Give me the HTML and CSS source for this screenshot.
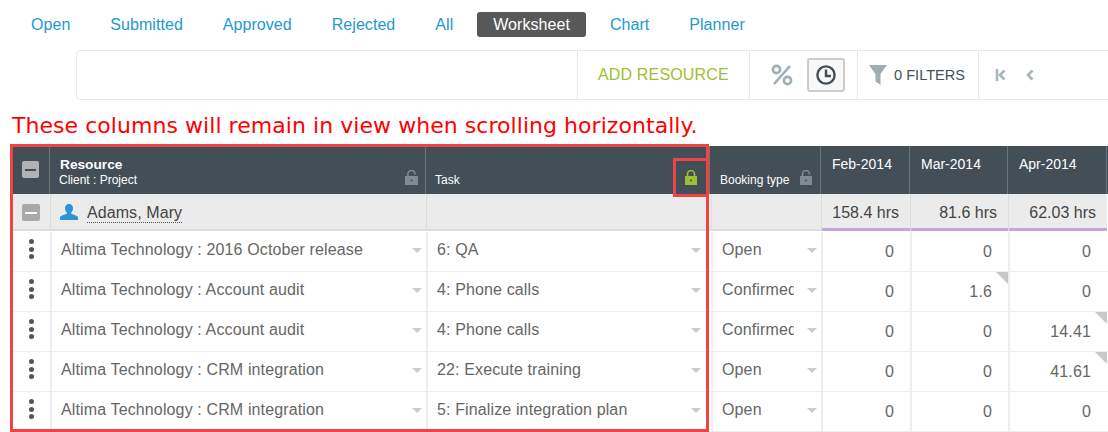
FILE: index.html
```html
<!DOCTYPE html>
<html lang="en">
<head>
  <meta charset="UTF-8">
  <title>Worksheet</title>
  <link rel="stylesheet" href="styles.css">
</head>
<body>

<nav class="tabs">
  <a>Open</a>
  <a>Submitted</a>
  <a>Approved</a>
  <a>Rejected</a>
  <a>All</a>
  <a class="active">Worksheet</a>
  <a>Chart</a>
  <a>Planner</a>
</nav>

<div class="toolbar">
  <div class="tool-space"></div>
  <div class="tool-section add">ADD RESOURCE</div>
  <div class="tool-section units">
    <svg class="percent" width="22" height="22" viewBox="0 0 22 22" fill="none" stroke="#9fadb4" stroke-width="2.6">
      <circle cx="5.5" cy="5.5" r="3.6"/>
      <circle cx="16.5" cy="16.5" r="3.6"/>
      <path d="M19 2 3 20"/>
    </svg>
    <span class="clock-btn">
      <svg width="20" height="20" viewBox="0 0 20 20" fill="none" stroke="#434e57" stroke-width="2.4">
        <circle cx="10" cy="10" r="8.6"/>
        <path d="M10 4.5V11H15"/>
      </svg>
    </span>
  </div>
  <div class="tool-section filters">
    <svg width="18" height="20" viewBox="0 0 18 20"><path d="M0 0H18L11.5 9V20L6.5 16.5V9Z" fill="#9fadb4"/></svg>
    <span>0 FILTERS</span>
  </div>
  <div class="tool-section pager">
    <svg width="11" height="12" viewBox="0 0 11 12" fill="none" stroke="#a9b6bc" stroke-width="2.6">
      <path d="M2 0V12"/>
      <path d="M9.5 1.5 5 6l4.5 4.5"/>
    </svg>
    <svg width="8" height="12" viewBox="0 0 8 12" fill="none" stroke="#a9b6bc" stroke-width="2.6">
      <path d="M6.5 1.5 2 6l4.5 4.5"/>
    </svg>
  </div>
</div>

<p class="caption">These columns will remain in view when scrolling horizontally.</p>

<div class="sheet">
  <div class="sheet-head">
    <div class="hcell hcheck"><span class="check check-head"></span></div>
    <div class="hcell resource">
      <strong>Resource</strong>
      <small>Client : Project</small>
      <svg class="lock" width="13" height="15" viewBox="0 0 13 15"><path d="M2.900 6V4a3.600 3.600 0 0 1 7.200 0v.6" fill="none" stroke="#7f8a91" stroke-width="1.600"/><path d="M0 6H13V15H0Z" fill="#7f8a91"/><circle cx="6.500" cy="10.500" r="1" fill="#434e57"/></svg>
    </div>
    <div class="hcell task">
      <small>Task</small>
      <svg class="lock" width="12" height="15" viewBox="0 0 12 15"><path d="M2.500 6V4a3.500 3.500 0 0 1 7 0v2" fill="none" stroke="#9dbf33" stroke-width="1.600"/><path d="M0 6H12V15H0Z" fill="#9dbf33"/><circle cx="6" cy="10.500" r="1" fill="#434e57"/></svg>
    </div>
    <div class="hcell booking">
      <small>Booking type</small>
      <svg class="lock" width="12" height="15" viewBox="0 0 12 15"><path d="M2.500 6V4a3.500 3.500 0 0 1 7 0v.6" fill="none" stroke="#7f8a91" stroke-width="1.600"/><path d="M0 6H12V15H0Z" fill="#7f8a91"/><circle cx="6" cy="10.500" r="1" fill="#434e57"/></svg>
    </div>
    <div class="hcell month">Feb-2014</div>
    <div class="hcell month">Mar-2014</div>
    <div class="hcell month">Apr-2014</div>
    <div class="hcell"></div>
  </div>

  <div class="group-row">
    <div class="gcell gcheck"><span class="check check-group"></span></div>
    <div class="gcell person">
      <svg width="18" height="16" viewBox="0 0 18 16"><path d="M9 0c2.600 0 4 1.800 4 4.200 0 1.900-.8 3.400-1.800 4.300v1.300c2.700.8 5.600 1.800 6.800 3.200V16H0v-3c1.200-1.400 4.100-2.400 6.800-3.200V8.500C5.800 7.600 5 6.100 5 4.200 5 1.800 6.400 0 9 0Z" fill="#2b93d6"/></svg>
      <span class="person-name">Adams, Mary</span>
    </div>
    <div class="gcell"></div>
    <div class="gcell"></div>
    <div class="gcell total">158.4 hrs</div>
    <div class="gcell total">81.6 hrs</div>
    <div class="gcell total">62.03 hrs</div>
  </div>

  <div class="row">
    <div class="cell dots"><i></i><i></i><i></i></div>
    <div class="cell pick">Altima Technology : 2016 October release</div>
    <div class="cell pick pick-task">6: QA</div>
    <div class="cell pick">Open</div>
    <div class="cell num">0</div>
    <div class="cell num">0</div>
    <div class="cell num">0</div>
  </div>
  <div class="row">
    <div class="cell dots"><i></i><i></i><i></i></div>
    <div class="cell pick">Altima Technology : Account audit</div>
    <div class="cell pick pick-task">4: Phone calls</div>
    <div class="cell pick"><span class="clip">Confirmed</span></div>
    <div class="cell num">0</div>
    <div class="cell num noted">1.6</div>
    <div class="cell num">0</div>
  </div>
  <div class="row">
    <div class="cell dots"><i></i><i></i><i></i></div>
    <div class="cell pick">Altima Technology : Account audit</div>
    <div class="cell pick pick-task">4: Phone calls</div>
    <div class="cell pick"><span class="clip">Confirmed</span></div>
    <div class="cell num">0</div>
    <div class="cell num">0</div>
    <div class="cell num noted">14.41</div>
  </div>
  <div class="row">
    <div class="cell dots"><i></i><i></i><i></i></div>
    <div class="cell pick">Altima Technology : CRM integration</div>
    <div class="cell pick pick-task">22: Execute training</div>
    <div class="cell pick">Open</div>
    <div class="cell num">0</div>
    <div class="cell num">0</div>
    <div class="cell num noted">41.61</div>
  </div>
  <div class="row">
    <div class="cell dots"><i></i><i></i><i></i></div>
    <div class="cell pick">Altima Technology : CRM integration</div>
    <div class="cell pick pick-task">5: Finalize integration plan</div>
    <div class="cell pick">Open</div>
    <div class="cell num">0</div>
    <div class="cell num">0</div>
    <div class="cell num">0</div>
  </div>

  <!-- Annotations over the grid -->
  <div class="mark mark-columns"></div>
  <div class="mark mark-lock"></div>
</div>

</body>
</html>
```

FILE: styles.css
```css
html, body {
  margin: 0;
  height: 432px;
  overflow: hidden;
}

body {
  font-family: "Liberation Sans", Arial, sans-serif;
  font-size: 16px;
  background-color: #fff;
  color: #666;
}

/* Tabs */
.tabs {
  display: flex;
  align-items: center;
  gap: 8px;
  height: 50px;
  padding: 0 0 1px 15px;
  box-sizing: border-box;
  letter-spacing: 0.05px;
}

.tabs a {
  height: 25px;
  line-height: 25px;
  padding: 0 16px;
  color: #2299d2;
  border-radius: 3px;
}

.tabs a.active {
  background-color: #585858;
  color: #fff;
}

/* Toolbar */
.toolbar {
  display: flex;
  height: 50px;
  box-sizing: border-box;
  margin-left: 76px;
  border: 1px solid #e8e8ee;
  border-right: 0;
  border-radius: 5px 0 0 5px;
}

.tool-space {
  width: 500px;
}

.tool-section {
  display: flex;
  align-items: center;
  border-left: 1px solid #e8e8ee;
}

.add {
  width: 172px;
  box-sizing: border-box;
  padding-left: 20px;
  color: #9dbf33;
  letter-spacing: 0.16px;
}

.units {
  width: 108px;
  box-sizing: border-box;
  padding-left: 21px;
  gap: 14px;
}

.clock-btn {
  display: flex;
  align-items: center;
  justify-content: center;
  width: 38px;
  height: 34px;
  box-sizing: border-box;
  border: 2px solid #ccc;
  border-radius: 3px;
  background-color: #f8f8f8;
}

.filters {
  width: 121px;
  box-sizing: border-box;
  padding-left: 11px;
  gap: 7px;
  font-size: 14.600px;
  color: #444f57;
}

.pager {
  padding-left: 16px;
  gap: 20px;
}

/* Red note */
.caption {
  margin: 0;
  height: 46px;
  padding-left: 12px;
  box-sizing: border-box;
  line-height: 52px;
  font-family: "DejaVu Sans", Verdana, sans-serif;
  font-size: 22px;
  letter-spacing: 0.05px;
  color: #ff0000;
  white-space: nowrap;
}

/* Sheet */
.sheet {
  position: relative;
  padding-left: 12px;
}

.sheet-head {
  display: grid;
  grid-template-columns: 38px 376px 284px 111px 89px 98px 99px 1fr;
  height: 48px;
  background-color: #434e57;
  color: #fff;
}

.hcell {
  position: relative;
  box-sizing: border-box;
  border-right: 1px solid #6b757c;
}

.hcell:last-child {
  border-right: 0;
}

.hcell strong {
  display: block;
  padding: 11px 0 0 10px;
  font-size: 13.700px;
  line-height: 15px;
}

.hcell small {
  display: block;
  font-size: 12px;
  line-height: 14px;
}

.resource small {
  padding-left: 9px;
  padding-top: 1px;
}

.task small,
.booking small {
  padding: 27px 0 0 10px;
}

.task small {
  padding-left: 9px;
}

.lock {
  position: absolute;
  right: 7px;
  bottom: 9px;
}

.task .lock {
  right: 12px;
}

.booking .lock {
  right: 8px;
}

.month {
  padding: 10px 0 0 11px;
  font-size: 14px;
  line-height: 16px;
}

.hcheck {
  display: flex;
  justify-content: center;
  padding-top: 15px;
}

.check {
  position: relative;
  display: block;
  box-sizing: border-box;
  border-radius: 2px;
  background-color: #b2b2b2;
}

.check::after {
  content: "";
  position: absolute;
  left: 3px;
  right: 3px;
  top: 50%;
  height: 2px;
  margin-top: -1px;
}

.check-head {
  width: 17px;
  height: 17px;
}

.check-head::after {
  background-color: #434e57;
}

.check-group {
  width: 18px;
  height: 17px;
  background-color: #a9a9a9;
}

.check-group::after {
  background-color: #fff;
}

.group-row,
.row {
  display: grid;
  grid-template-columns: 38px 376px 285px 110px 89px 98px 99px;
}

.group-row {
  height: 37px;
  background-color: #ebebeb;
  width: 1095px;
  border-bottom: 2px solid #ddd;
  box-sizing: border-box;
  margin-bottom: 1px;
}

.gcell {
  position: relative;
  box-sizing: border-box;
  border-left: 1px solid #ddd;
}

.gcheck {
  display: flex;
  justify-content: center;
  padding-top: 10px;
  border-left: 0;
}

.person {
  display: flex;
  align-items: flex-start;
  gap: 9px;
  padding: 10px 0 0 9px;
  color: #444;
  letter-spacing: 0.08px;
}

.person-name {
  line-height: 18px;
  border-bottom: 1px dotted #555;
}

.total {
  padding-top: 10px;
  text-align: right;
  padding-right: 11px;
  line-height: 18px;
  color: #444;
}

/* purple marker under the monthly totals */
.total::after {
  content: "";
  position: absolute;
  left: 0;
  right: 0;
  bottom: -2px;
  height: 3px;
  background-color: #c5a5e0;
}

.row {
  height: 40px;
  width: 1096px;
  border-bottom: 1px solid #eee;
  box-sizing: border-box;
}

.cell {
  position: relative;
  box-sizing: border-box;
  border-left: 2px solid #eee;
  line-height: 36px;
  white-space: nowrap;
  letter-spacing: 0.13px;
}

.dots {
  display: flex;
  flex-direction: column;
  align-items: center;
  gap: 2.500px;
  padding: 7px 0 0 0;
  border-left: 0;
}

.dots i {
  width: 5px;
  height: 5px;
  border-radius: 50%;
  background-color: #555;
}

.pick {
  padding-left: 9px;
}

.pick::after {
  content: "";
  position: absolute;
  right: 4px;
  top: 16px;
  border-style: solid;
  border-width: 5px 5px 0;
  border-color: #ccc transparent transparent;
}

.pick-task::after {
  right: 10px;
}

.clip {
  display: block;
  width: 72px;
  overflow: hidden;
}

.num {
  padding-right: 16px;
  text-align: right;
  line-height: 39px;
}

/* grey corner on edited cells */
.noted::before {
  content: "";
  position: absolute;
  top: 0;
  right: 0;
  border-style: solid;
  border-width: 0 12px 12px 0;
  border-color: transparent #c8c8c8 transparent transparent;
}

.mark {
  position: absolute;
  box-sizing: border-box;
  border: 3px solid #ee4444;
  pointer-events: none;
}

.mark-columns {
  left: 10px;
  top: -2px;
  width: 699px;
  height: 288px;
}

.mark-lock {
  left: 673px;
  top: 12px;
  width: 36px;
  height: 39px;
}
```
